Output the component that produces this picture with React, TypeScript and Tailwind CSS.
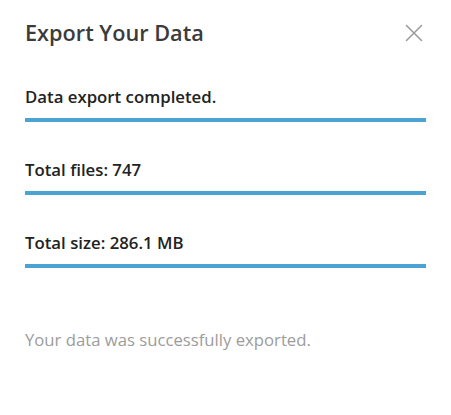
import { X } from 'lucide-react';

const rows = ['Data export completed.', 'Total files: 747', 'Total size: 286.1 MB'];

export default function App() {
  return (
    <div className="h-[415px] w-[451px] bg-white px-[25px] pt-[19px] font-['Open_Sans',sans-serif]">
      <div className="flex h-[28px] items-center justify-between">
        <h1 className="text-[21.7px] leading-[28px] font-semibold text-[#3b3b3b]">Export Your Data</h1>
        <button className="-mr-[3px] text-[#9a9a9a]">
          <X size={30} strokeWidth={1.2} />
        </button>
      </div>

      <div className="mt-[40px] flex flex-col gap-[38px]">
        {rows.map((label) => (
          <div key={label}>
            <p className="text-[16.8px] leading-[20px] font-semibold text-[#222]">{label}</p>
            <div className="mt-[11px] h-[4px] bg-[#4ba3d3]" />
          </div>
        ))}
      </div>

      <p className="mt-[60px] text-[16.7px] leading-[24px] text-[#9c9c9c]">Your data was successfully exported.</p>
    </div>
  );
}
